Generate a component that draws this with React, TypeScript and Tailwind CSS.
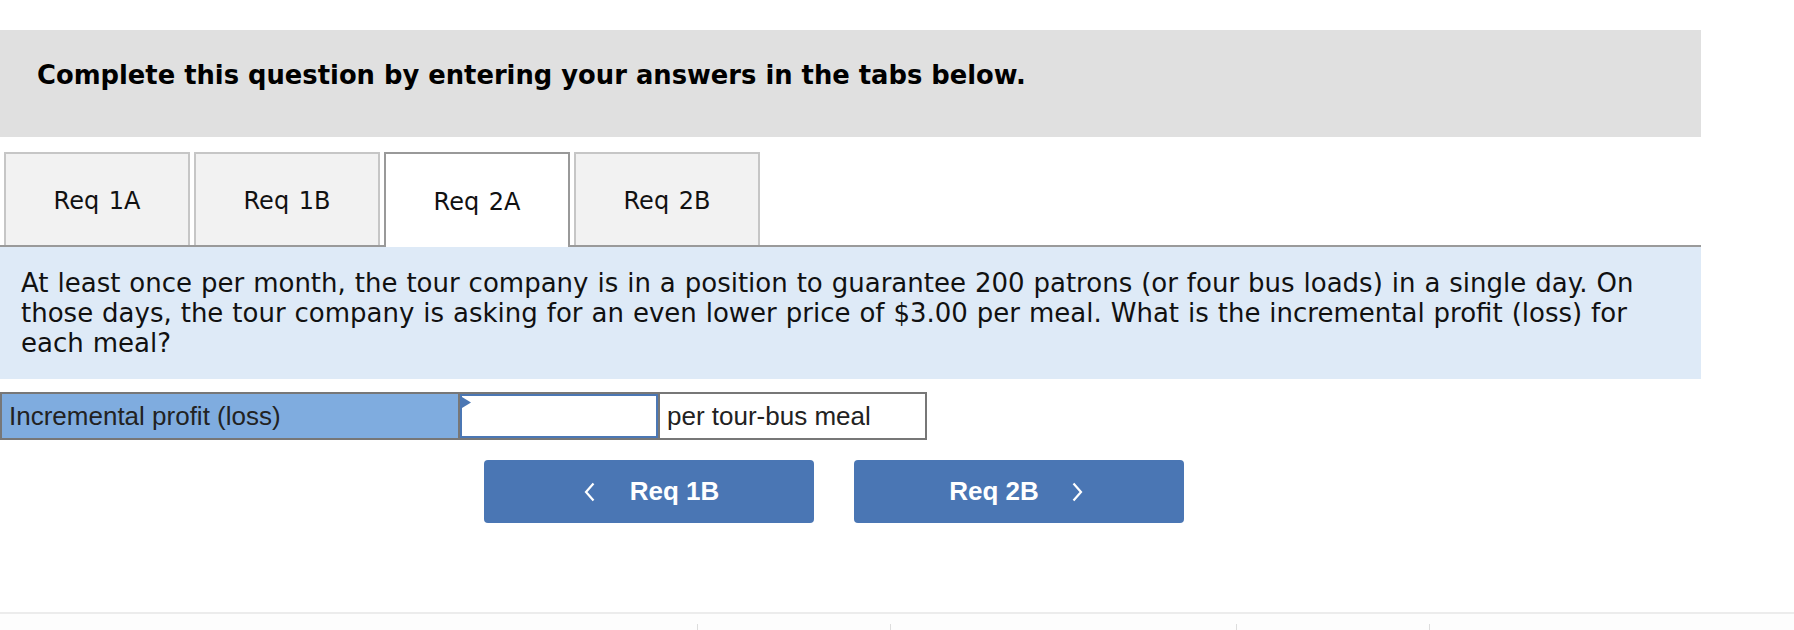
import React from "react";

const verdana = { fontFamily: '"DejaVu Sans", Verdana, sans-serif' };

function Tab({ label, active }: { label: string; active?: boolean }) {
  return active ? (
    <div className="relative z-10 -mb-[2px] flex h-[95px] w-[186px] items-center justify-center border-2 border-b-0 border-[#999999] bg-white pt-[3px] text-[24px] text-[#111] [word-spacing:2px]">
      {label}
    </div>
  ) : (
    <div className="flex h-[93px] w-[186px] items-center justify-center border-2 border-b-0 border-[#c6c6c6] bg-[#f2f2f2] pt-[3px] text-[24px] text-[#111] [word-spacing:2px]">
      {label}
    </div>
  );
}

function ChevronLeft() {
  return (
    <svg width="11" height="20" viewBox="0 0 11 20" fill="none">
      <polyline points="9.5,1.5 2,10 9.5,18.5" stroke="white" strokeWidth="2.2" />
    </svg>
  );
}

function ChevronRight() {
  return (
    <svg width="11" height="20" viewBox="0 0 11 20" fill="none">
      <polyline points="1.5,1.5 9,10 1.5,18.5" stroke="white" strokeWidth="2.2" />
    </svg>
  );
}

export default function App() {
  return (
    <div className="h-[630px] w-[1794px] overflow-hidden bg-white">
      <div className="w-[1701px] pt-[30px]" style={verdana}>
        <div className="h-[107px] bg-[#e0e0e0] pl-[37px] pt-[30px]">
          <h2 className="text-[25.8px] font-bold leading-[31px] text-black">
            Complete this question by entering your answers in the tabs below.
          </h2>
        </div>

        <div className="mt-[15px] flex items-end gap-[4px] border-b-2 border-[#9a9a9a] pl-[4px]">
          <Tab label="Req 1A" />
          <Tab label="Req 1B" />
          <Tab label="Req 2A" active />
          <Tab label="Req 2B" />
        </div>

        <div className="bg-[#deeaf7] px-[21px] py-[21px] text-[26px] leading-[30px] text-[#111] [word-spacing:0.7px]">
          At least once per month, the tour company is in a position to guarantee 200 patrons (or four bus loads) in a single day. On those days, the tour company is asking for an even lower price of $3.00 per meal. What is the incremental profit (loss) for each meal?
        </div>
      </div>

      <div
        className="mt-[13px] flex h-[48px] w-[927px] border-2 border-[#777777] text-[26px] text-[#222]"
        style={{ fontFamily: '"Liberation Sans", Arial, sans-serif' }}
      >
        <div className="flex w-[458px] items-center border-r-2 border-[#777777] bg-[#7facdf] pl-[7px]">
          Incremental profit (loss)
        </div>
        <div className="relative w-[200px] border-r-2 border-[#777777]">
          <div className="h-full w-full border-2 border-[#4b77b4] bg-white" />
          <svg className="absolute left-[2px] top-[3px]" width="9" height="11" viewBox="0 0 9 11">
            <polygon points="0,0 9,5.5 0,11" fill="#4b77b4" />
          </svg>
        </div>
        <div className="flex flex-1 items-center bg-white pl-[7px]">per tour-bus meal</div>
      </div>

      <div
        className="ml-[484px] mt-[20px] flex gap-[40px] text-[26px] font-bold text-white"
        style={{ fontFamily: '"Liberation Sans", Arial, sans-serif' }}
      >
        <div className="flex h-[63px] w-[330px] items-center justify-center gap-[35px] rounded-[4px] bg-[#4a76b4] pl-[5px]">
          <ChevronLeft />
          <span>Req 1B</span>
        </div>
        <div className="flex h-[63px] w-[330px] items-center justify-center gap-[33px] rounded-[4px] bg-[#4a76b4] pr-[6px]">
          <span>Req 2B</span>
          <ChevronRight />
        </div>
      </div>

      <div className="mt-[89px] h-[2px] w-full bg-[#ececec]" />
      <div className="flex h-[16px] w-full bg-[#fdfdfd] pt-[10px]">
        <div className="w-[697px]" />
        <div className="h-[6px] w-px bg-[#dddddd]" />
        <div className="w-[192px]" />
        <div className="h-[6px] w-px bg-[#dddddd]" />
        <div className="w-[345px]" />
        <div className="h-[6px] w-px bg-[#dddddd]" />
        <div className="w-[192px]" />
        <div className="h-[6px] w-px bg-[#dddddd]" />
      </div>
    </div>
  );
}
